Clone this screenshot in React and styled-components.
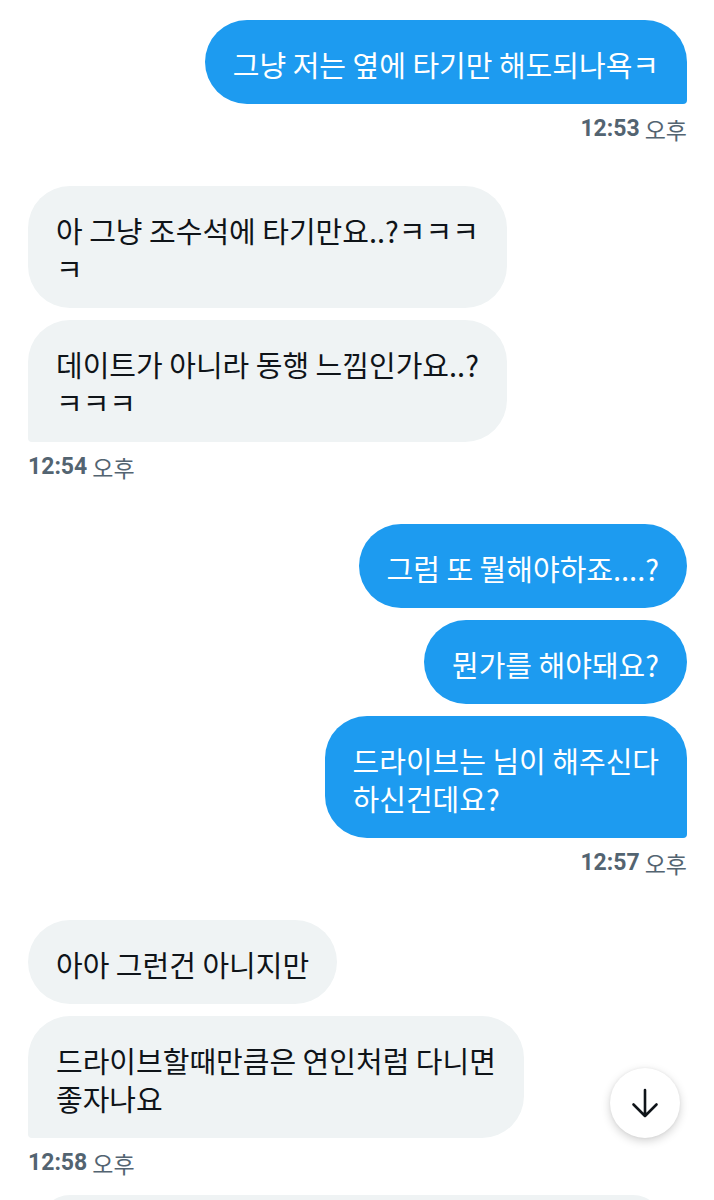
import React from 'react'
import styled, { createGlobalStyle } from 'styled-components'

const GlobalStyle = createGlobalStyle`
    html, body {
        margin: 0;
        padding: 0;
        background: #ffffff;
    }
    body {
        font-family: "Noto Sans CJK KR", "Noto Sans", sans-serif;
        -webkit-font-smoothing: antialiased;
    }
`

const Page = styled.div`
    position: relative;
    height: 1200px;
    overflow: hidden;
    box-sizing: border-box;
    padding: 20px 27px 0 28px;
    display: flex;
    flex-direction: column;
    gap: 42px;
`

const Group = styled.div`
    display: flex;
    flex-direction: column;
    align-items: ${(p) => (p.$mine ? 'flex-end' : 'flex-start')};
`

const Bubbles = styled.div`
    display: flex;
    flex-direction: column;
    align-items: ${(p) => (p.$mine ? 'flex-end' : 'flex-start')};
    gap: 12px;
`

const Bubble = styled.div`
    box-sizing: border-box;
    padding: 25px 28px 21px 28px;
    font-size: 29px;
    line-height: 38px;
    background: ${(p) => (p.$mine ? '#1d9bf0' : '#eff3f4')};
    color: ${(p) => (p.$mine ? '#ffffff' : '#0f1419')};
    border-radius: 42px;
    ${(p) => p.$tail && (p.$mine ? 'border-bottom-right-radius: 4px;' : 'border-bottom-left-radius: 4px;')}
    white-space: nowrap;
`

const Stamp = styled.div`
    margin-top: 10px;
    height: 30px;
    line-height: 30px;
    font-size: 23px;
    color: #536471;
    display: flex;
    gap: 5px;
    b {
        font-family: Roboto, "Liberation Sans", sans-serif;
        font-weight: 700;
    }
`

const Composer = styled.div`
    margin: -25px 24px 0 12px;
    height: 60px;
    border-radius: 30px;
    background: #eff3f4;
    flex-shrink: 0;
`

const ScrollButton = styled.button`
    position: absolute;
    right: 34px;
    bottom: 62px;
    width: 70px;
    height: 70px;
    border: none;
    border-radius: 50%;
    background: #ffffff;
    box-shadow: 0 3px 10px rgba(0, 0, 0, 0.18), 0 0 3px rgba(0, 0, 0, 0.06);
    display: flex;
    align-items: center;
    justify-content: center;
    padding: 0;
`

const groups = [
    { mine: true, time: '12:53', msgs: [['그냥 저는 옆에 타기만 해도되나욕ㅋ']] },
    {
        mine: false,
        time: '12:54',
        msgs: [
            ['아 그냥 조수석에 타기만요..?ㅋㅋㅋ', 'ㅋ'],
            ['데이트가 아니라 동행 느낌인가요..?', 'ㅋㅋㅋ'],
        ],
    },
    {
        mine: true,
        time: '12:57',
        msgs: [['그럼 또 뭘해야하죠....?'], ['뭔가를 해야돼요?'], ['드라이브는 님이 해주신다', '하신건데요?']],
    },
    {
        mine: false,
        time: '12:58',
        msgs: [['아아 그런건 아니지만'], ['드라이브할때만큼은 연인처럼 다니면', '좋자나요']],
    },
]

/* Chat thread */
function App() {
    return (
        <>
            <GlobalStyle />
            <Page>
                {groups.map((g, gi) => (
                    <Group key={gi} $mine={g.mine}>
                        <Bubbles $mine={g.mine}>
                            {g.msgs.map((lines, i) => (
                                <Bubble key={i} $mine={g.mine} $tail={i === g.msgs.length - 1}>
                                    {lines.map((l, li) => (
                                        <div key={li}>{l}</div>
                                    ))}
                                </Bubble>
                            ))}
                        </Bubbles>
                        <Stamp>
                            <b>{g.time}</b>
                            <span>오후</span>
                        </Stamp>
                    </Group>
                ))}
                <Composer />
                <ScrollButton aria-label="scroll down">
                    <svg width="30" height="30" viewBox="0 0 30 30" fill="none">
                        <path
                            d="M15 2v26M3.5 16.5L15 28l11.5-11.5"
                            stroke="#0f1419"
                            strokeWidth="2.6"
                            strokeLinecap="round"
                            strokeLinejoin="round"
                        />
                    </svg>
                </ScrollButton>
            </Page>
        </>
    )
}

export default App
